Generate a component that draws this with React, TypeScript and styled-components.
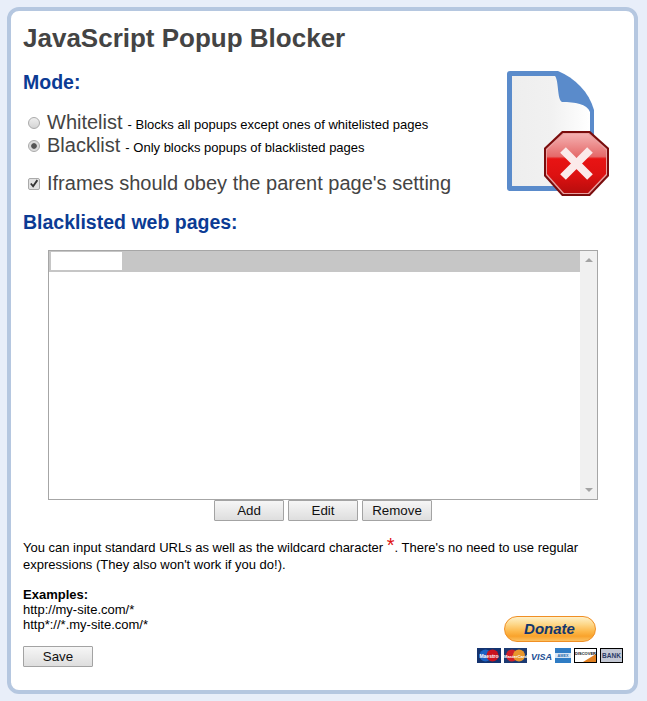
import type { FC } from 'react'
import styled, { createGlobalStyle } from 'styled-components'

const GlobalStyle = createGlobalStyle`
	html, body {
		margin: 0;
		padding: 0;
		background: #e8eef9;
	}
	body {
		font-family: 'Liberation Sans', Arial, sans-serif;
	}
`

const App: FC = () => {
	return (
		<Page>
			<GlobalStyle />
			<Card>
				<PageIcon />
				<Title>JavaScript Popup Blocker</Title>
				<Heading>Mode:</Heading>
				<RadioGroup>
					<OptionRow>
						<Radio />
						<BigLabel>Whitelist</BigLabel>
						<Hint>- Blocks all popups except ones of whitelisted pages</Hint>
					</OptionRow>
					<OptionRow>
						<Radio $checked />
						<BigLabel>Blacklist</BigLabel>
						<Hint>- Only blocks popups of blacklisted pages</Hint>
					</OptionRow>
				</RadioGroup>
				<CheckRow>
					<CheckBox>
						<svg width="11" height="11" viewBox="0 0 11 11">
							<path d="M2 5.5 L4.5 8.5 L9.2 1.8" fill="none" stroke="#333" strokeWidth="2" />
						</svg>
					</CheckBox>
					<BigLabel>Iframes should obey the parent page's setting</BigLabel>
				</CheckRow>
				<ListHeading>Blacklisted web pages:</ListHeading>
				<ListBox>
					<ListMain>
						<ListHeader>
							<HeaderCell />
						</ListHeader>
					</ListMain>
					<ScrollTrack>
						<Arrow $up />
						<Arrow />
					</ScrollTrack>
				</ListBox>
				<ButtonRow>
					<Button>Add</Button>
					<Button>Edit</Button>
					<Button>Remove</Button>
				</ButtonRow>
				<Note>
					You can input standard URLs as well as the wildcard character <Star>*</Star>. There's no need to use regular
					expressions (They also won't work if you do!).
				</Note>
				<Bottom>
					<div>
						<Examples>
							<strong>Examples:</strong>
							<br />
							http://my-site.com/*
							<br />
							http*://*.my-site.com/*
						</Examples>
						<Button>Save</Button>
					</div>
					<DonateBlock>
						<DonateButton>Donate</DonateButton>
						<LogoStrip>
							<CardLogos />
						</LogoStrip>
					</DonateBlock>
				</Bottom>
			</Card>
		</Page>
	)
}

const PageIcon: FC = () => (
	<IconWrap>
		<svg width="104" height="126" viewBox="0 0 104 126">
			<defs>
				<linearGradient id="sheet" x1="0" x2="1" y1="0" y2="0">
					<stop offset="0" stopColor="#eeeeee" />
					<stop offset="0.5" stopColor="#f1f1f1" />
					<stop offset="1" stopColor="#ffffff" />
				</linearGradient>
				<linearGradient id="stop" x1="0" x2="0" y1="0" y2="1">
					<stop offset="0" stopColor="#f4b0b0" />
					<stop offset="0.38" stopColor="#e56a6a" />
					<stop offset="0.42" stopColor="#e81414" />
					<stop offset="0.7" stopColor="#dd1111" />
					<stop offset="1" stopColor="#b80d0d" />
				</linearGradient>
			</defs>
			<path d="M0 3 Q0 0 3 0 H51 C68 7 82 21 87 39 V120 H3 Q0 120 0 117 Z" fill="#5a8bcb" />
			<path d="M5 5 H48 C52 10 50 28 55 31 C68 31 80 33 83 41 V115 H5 Z" fill="url(#sheet)" />
			<polygon points="55,60 83,60 102,77 102,105 83,125 55,125 37,105 37,77" fill="#7a0c0c" />
			<polygon points="56,62 82,62 100,78 100,104 82,123 56,123 39,104 39,78" fill="#e8a0a0" />
			<polygon points="57,63 81,63 99,79 99,103 81,122 57,122 40,103 40,79" fill="url(#stop)" />
			<path d="M56 79 L83 106 M83 79 L56 106" stroke="#fbeaea" strokeWidth="8" fill="none" />
		</svg>
	</IconWrap>
)

const CardLogos: FC = () => (
	<svg width="146" height="16" viewBox="0 0 146 16">
		<rect x="0" y="0" width="24" height="15" fill="#14336f" />
		<circle cx="8.5" cy="7.5" r="6" fill="#1c62c4" />
		<circle cx="15.5" cy="7.5" r="6" fill="#c9141f" />
		<text x="12" y="9.5" fontSize="5" fontWeight="700" fill="#fff" textAnchor="middle" fontFamily="Liberation Sans">Maestro</text>
		<rect x="27" y="0" width="23" height="15" fill="#1c3a72" />
		<circle cx="35" cy="7.5" r="6" fill="#d0202a" />
		<circle cx="42" cy="7.5" r="6" fill="#e8962c" />
		<text x="38.5" y="9.5" fontSize="4.2" fontWeight="700" fill="#fff" textAnchor="middle" fontFamily="Liberation Sans">MasterCard</text>
		<text x="64.5" y="11.5" fontSize="9" fontWeight="700" fontStyle="italic" fill="#1a4f94" textAnchor="middle" fontFamily="Liberation Sans">VISA</text>
		<rect x="78" y="0" width="16" height="15" fill="#2f7cc4" />
		<rect x="78" y="5" width="16" height="5" fill="#d7e6f5" />
		<text x="86" y="8.8" fontSize="3.8" fontWeight="700" fill="#2a6cb0" textAnchor="middle" fontFamily="Liberation Sans">AMEX</text>
		<rect x="97.5" y="0.5" width="22" height="14" fill="#fff" stroke="#000" />
		<path d="M106 14 L119 14 L119 6 Z" fill="#e07f20" />
		<text x="108.5" y="6.5" fontSize="4" fontWeight="700" fill="#111" textAnchor="middle" fontFamily="Liberation Sans">DISCOVER</text>
		<rect x="123.5" y="0.5" width="22" height="14" fill="#c3c8d4" stroke="#000" />
		<text x="134.5" y="10" fontSize="6.5" fontWeight="700" fill="#2a3a66" textAnchor="middle" fontFamily="Liberation Sans">BANK</text>
	</svg>
)

const Page = styled.div`
	padding: 7px 9px 7px 7px;
	width: 647px;
	height: 701px;
	box-sizing: border-box;
`

const Card = styled.main`
	position: relative;
	box-sizing: border-box;
	width: 631px;
	height: 687px;
	padding: 13px 12px 0;
	background: #fff;
	border: 4px solid #b5c7e0;
	border-radius: 12px;
	color: #444;
`

const IconWrap = styled.div`
	position: absolute;
	top: 60px;
	left: 496px;
	line-height: 0;
`

const Title = styled.h1`
	margin: 0;
	font-size: 26px;
	line-height: 29px;
	font-weight: 700;
	color: #444;
`

const Heading = styled.h2`
	margin: 17px 0 0;
	font-size: 19.5px;
	line-height: 24px;
	font-weight: 700;
	color: #0b3b94;
`

const ListHeading = styled(Heading)`
	margin-top: 15px;
`

const RadioGroup = styled.div`
	margin-top: 17px;
`

const OptionRow = styled.div`
	display: flex;
	align-items: baseline;
	height: 23px;
	line-height: 23px;
`

const Radio = styled.span<{ $checked?: boolean }>`
	align-self: center;
	box-sizing: border-box;
	flex: none;
	width: 12px;
	height: 12px;
	margin: 0 7px 0 5px;
	border: 1px solid #aaa;
	border-radius: 50%;
	background: ${(p) =>
		p.$checked
			? 'radial-gradient(circle, #555 0, #555 2.4px, #d8d8d8 3.2px, #e8e8e8 100%)'
			: 'linear-gradient(#eee, #d4d4d4)'};
`

const BigLabel = styled.span`
	font-size: 20px;
	color: #444;
`

const Hint = styled.span`
	margin-left: 5px;
	font-size: 13px;
	color: #000;
`

const CheckRow = styled.div`
	display: flex;
	align-items: center;
	height: 24px;
	margin-top: 14px;
`

const CheckBox = styled.span`
	box-sizing: border-box;
	flex: none;
	display: flex;
	align-items: center;
	justify-content: center;
	width: 12px;
	height: 12px;
	margin: 1px 7px 0 5px;
	border: 1px solid #aaa;
	border-radius: 2px;
	background: #e2e2e2;
`

const ListBox = styled.div`
	display: flex;
	box-sizing: border-box;
	width: 550px;
	height: 250px;
	margin: 16px 0 0 25px;
	border: 1px solid #a6a6a6;
`

const ListMain = styled.div`
	flex: 1;
`

const ListHeader = styled.div`
	box-sizing: border-box;
	height: 21px;
	padding: 1px 0 2px 2px;
	background: #c6c6c6;
`

const HeaderCell = styled.div`
	width: 71px;
	height: 18px;
	background: #fff;
`

const ScrollTrack = styled.div`
	display: flex;
	flex-direction: column;
	justify-content: space-between;
	align-items: center;
	box-sizing: border-box;
	width: 17px;
	padding: 7px 0;
	background: #f0f0f0;
`

const Arrow = styled.span<{ $up?: boolean }>`
	width: 0;
	height: 0;
	border-left: 4px solid transparent;
	border-right: 4px solid transparent;
	${(p) => (p.$up ? 'border-bottom: 4px solid #a3a3a3;' : 'border-top: 4px solid #a3a3a3;')}
`

const ButtonRow = styled.div`
	display: flex;
	justify-content: flex-start;
	gap: 4px;
	margin: 0 0 0 191px;
`

const Button = styled.button`
	box-sizing: border-box;
	width: 70px;
	height: 21px;
	padding: 0;
	font-family: 'Liberation Sans', Arial, sans-serif;
	font-size: 13.33px;
	color: #111;
	background: linear-gradient(#f6f6f6, #dedede);
	border: 1px solid #a3a3a3;
	border-radius: 1px;
`

const Note = styled.p`
	margin: 18px 0 0;
	font-size: 13px;
	line-height: 17px;
	color: #000;
`

const Star = styled.span`
	display: inline-block;
	height: 13px;
	font-size: 20px;
	line-height: 13px;
	color: #e01010;
`

const Bottom = styled.div`
	display: flex;
	justify-content: space-between;
	align-items: flex-end;
	margin-top: 14px;
`

const Examples = styled.p`
	margin: 0 0 14px;
	font-size: 13px;
	line-height: 15px;
	color: #000;
`

const DonateBlock = styled.div`
	display: flex;
	flex-direction: column;
	align-items: center;
	gap: 6px;
	margin-bottom: 3px;
	line-height: 0;
`

const DonateButton = styled.span`
	box-sizing: border-box;
	width: 92px;
	height: 26px;
	font-size: 15px;
	line-height: 23px;
	font-weight: 700;
	font-style: italic;
	text-align: center;
	color: #12376e;
	background: linear-gradient(#fef0c8 0, #fdd88a 30%, #fdb84a 60%, #f9a32c 80%, #fbc060 100%);
	border: 1px solid #f08f24;
	border-radius: 13px;
`

const LogoStrip = styled.div`
	margin-right: -1px;
`

export default App
